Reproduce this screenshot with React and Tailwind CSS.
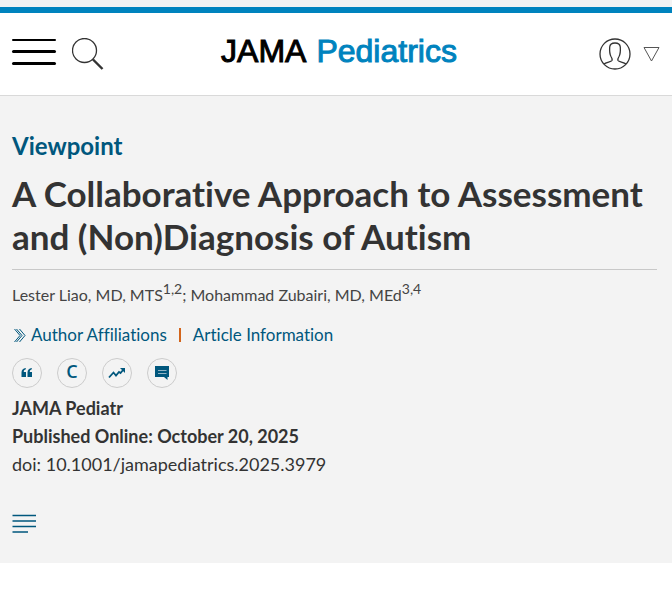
// Article header page: journal masthead + article front matter

const tools = [
  { label: 'Cite this article', icon: <QuoteIcon /> },
  { label: 'Permissions', icon: <span className="pb-1 text-lg leading-none font-semibold [-webkit-text-stroke:0]"><CopyrightIcon /></span> },
  { label: 'Metrics', icon: <TrendIcon /> },
  { label: 'Comments', icon: <CommentIcon /> },
];

function SearchIcon() {
  return (
    <svg width="32" height="32" viewBox="0 0 32 32" fill="none" stroke="#333">
      <circle cx="12.5" cy="12.5" r="12" strokeWidth="1.3" />
      <path d="M21 21.5L30.5 31" strokeWidth="2.4" />
    </svg>
  );
}

function UserIcon() {
  return (
    <svg width="32" height="32" viewBox="0 0 32 32" fill="none" stroke="#333" strokeWidth="1.3">
      <circle cx="16" cy="16" r="15" />
      <path d="M5 26C7 24 12 24 13 22.5C13.5 21 13 20 12 18.5C10.5 16 10.5 12 10.7 9C11 6 13 5 16 5S21 6 21.3 9C21.5 12 21.5 16 20 18.5C19 20 18.5 21 19 22.5C20 24 25 24 27 26" />
    </svg>
  );
}

function QuoteIcon() {
  return (
    <svg width="12" height="10" viewBox="0 0 12 10" fill="currentColor">
      <path d="M4.8 0V1.3C3.4 1.7 2.7 2.6 2.8 4H5V9H0.5V4.6C0.5 2 2 0.4 4.8 0Z" />
      <path d="M10.8 0V1.3C9.4 1.7 8.7 2.6 8.8 4H11V9H6.5V4.6C6.5 2 8 0.4 10.8 0Z" />
    </svg>
  );
}

function CopyrightIcon() {
  return <span className="font-['Open_Sans','Noto_Sans',sans-serif]">C</span>;
}

function TrendIcon() {
  return (
    <svg width="18" height="12" viewBox="0 0 18 12" fill="none" stroke="currentColor" strokeWidth="1.8">
      <path d="M1 10.5L5.5 5.5L8 8.5L11 5L12.5 6L15.5 2.5" />
      <path d="M12 1H17V6Z" fill="currentColor" stroke="none" />
    </svg>
  );
}

function CommentIcon() {
  return (
    <svg width="14" height="14" viewBox="0 0 14 14">
      <path d="M0 0H14V11H12.5V14L9 11H0Z" fill="currentColor" />
      <path d="M3 4.5H11.5M3 7.5H11.5" stroke="#8fb3c4" strokeWidth="1.2" />
    </svg>
  );
}

function Masthead() {
  return (
    <header className="border-t-[6px] border-b border-t-[#0083be] border-b-[#d9d9d9] bg-white">
      <div className="grid h-[82px] grid-cols-[1fr_auto_1fr] items-center px-3">
        <div className="flex items-center gap-4">
          <button type="button" aria-label="Menu" className="flex w-11 flex-col gap-[9px] pb-1">
            <span className="h-[2px] w-full rounded bg-black" />
            <span className="h-[3px] w-full rounded bg-black" />
            <span className="h-[3px] w-full rounded bg-black" />
          </button>
          <button type="button" aria-label="Search"><SearchIcon /></button>
        </div>
        <a href="#" className="flex gap-2.5 pb-1.5 pl-1.5 font-['Liberation_Sans',Arial,sans-serif] text-[32px] leading-9 text-black [-webkit-text-stroke:1px]">
          <span>JAMA</span> <span className="text-[#0083be]">Pediatrics</span>
        </a>
        <button type="button" aria-label="Account" className="flex items-center gap-3 justify-self-end">
          <UserIcon />
          <svg width="17" height="16" viewBox="0 0 17 16" fill="none" stroke="#555">
            <path d="M1 1.5H16L8.5 15Z" />
          </svg>
        </button>
      </div>
    </header>
  );
}

export default function App() {
  return (
    <div className="bg-white font-['Lato','Open_Sans',sans-serif] text-[#333] [font-variant-ligatures:none]">
      <div className="bg-[#f3f3f3] pt-[7px]">
        <Masthead />
        <main className="px-3 pt-9 pb-[29px]">
          <p className="text-2xl leading-7 font-bold text-[#00577d]">Viewpoint</p>
          <h1 className="mt-3 text-[35px] leading-[43px] font-bold">
            A Collaborative Approach to Assessment and (Non)Diagnosis of Autism
          </h1>
          <div className="mt-[11px] mr-[3px] border-t border-[#c8c8c8] pt-[11px]">
            <p className="text-base leading-7 text-[#444]">
              Lester Liao, MD, MTS<sup className="text-sm leading-none">1,2</sup>; Mohammad Zubairi, MD, MEd<sup className="text-sm leading-none">3,4</sup>
            </p>
          </div>

          <nav className="mt-3 flex items-center text-[17px] leading-7 text-[#00577d]">
            <a href="#" className="flex items-center gap-1">
              <svg width="15" height="16" viewBox="0 0 15 16" fill="none" stroke="currentColor">
                <path d="M2.5 2L8 8.5L2.5 15M4.5 2L10 8.5L4.5 15M7.5 2L13 8.5L7.5 15" />
              </svg>
              Author Affiliations
            </a>
            <span className="mx-3 h-[14px] w-[2px] bg-[#d3651c]" />
            <a href="#">Article Information</a>
          </nav>

          <div className="mt-[9px] flex gap-[15px] text-[#00577d]">
            {tools.map(t => (
              <button key={t.label} type="button" aria-label={t.label}
                className="flex size-[30px] items-center justify-center rounded-full border border-[#ccc]">
                {t.icon}
              </button>
            ))}
          </div>

          <div className="mt-[6px] text-lg leading-7">
            <p className="font-bold">JAMA Pediatr</p>
            <p className="font-bold">Published Online: October 20, 2025</p>
            <p>doi: 10.1001/jamapediatrics.2025.3979</p>
          </div>

          <button type="button" aria-label="Contents" className="mt-9 block text-[#00577d]">
            <svg width="24" height="20" viewBox="0 0 24 20" stroke="currentColor" strokeWidth="1.5">
              <path d="M0.5 1.5H24M0.5 7H24M0.5 12.5H24M0.5 18H16" />
            </svg>
          </button>
        </main>
      </div>
    </div>
  );
}
